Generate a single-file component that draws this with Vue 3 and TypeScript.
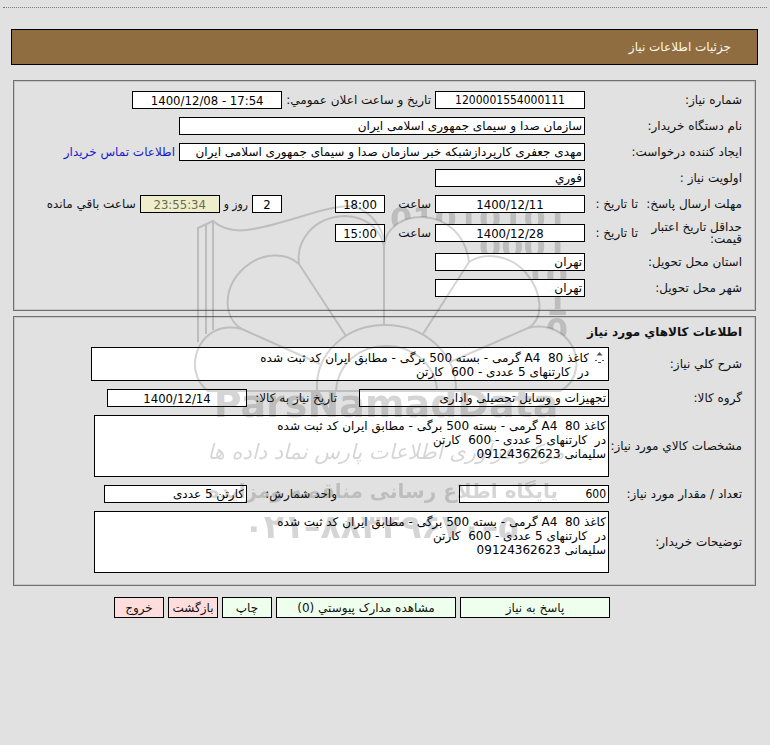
<script setup lang="ts">
import { reactive } from 'vue'

const goodsText = 'کاغذ A4  80 گرمی - بسته 500 برگی - مطابق ایران کد ثبت شده\nدر  کارتنهای 5 عددی - 600  کارتن'

const need = reactive({
  number: '1200001554000111',
  announced: '1400/12/08 - 17:54',
  buyer: 'سازمان صدا و سیمای جمهوری اسلامی ایران',
  creator: 'مهدی جعفری کارپردازشبکه خبر سازمان صدا و سیمای جمهوری اسلامی ایران',
  priority: 'فوري',
  replyDate: '1400/12/11',
  replyTime: '18:00',
  daysLeft: '2',
  timeLeft: '23:55:34',
  validDate: '1400/12/28',
  validTime: '15:00',
  province: 'تهران',
  city: 'تهران',
})

const goods = reactive({
  summary: goodsText,
  group: 'تجهیزات و وسایل تحصیلی واداری',
  neededOn: '1400/12/14',
  details: goodsText + '\nسلیمانی 09124362623',
  quantity: '600',
  unit: 'کارتن 5 عددی',
  notes: goodsText + '\nسلیمانی 09124362623',
})
</script>

<template>
  <div class="page" dir="rtl">
    <svg class="watermark under" viewBox="190 200 400 350" aria-hidden="true" direction="ltr">
      <defs>
        <mask id="behind-petals" maskUnits="userSpaceOnUse" x="190" y="190" width="400" height="360">
          <rect x="190" y="190" width="400" height="360" fill="#fff" />
          <path d="M384 330V246C388 206 462 204 469 262C500 245 540 270 540 300Q540 318 528 328C560 322 578 345 577 365L560 391H384Z" fill="#000" />
        </mask>
      </defs>
      <g class="bits" mask="url(#behind-petals)">
        <text x="568" y="230">01010101</text>
        <text x="568" y="258">0001</text>
        <text x="568" y="287">10</text>
        <text x="568" y="315">1</text>
        <text x="568" y="341">0</text>
      </g>
    </svg>

    <hr class="divider" />
    <header class="title-bar"><h1>جزئیات اطلاعات نیاز</h1></header>

    <main class="content">
      <section class="panel">
        <div class="row">
          <label class="caption" for="number">شماره نیاز:</label>
          <input id="number" v-model="need.number" class="box medium code" readonly />
          <label for="announced">تاریخ و ساعت اعلان عمومي:</label>
          <input id="announced" v-model="need.announced" class="box medium num" dir="ltr" readonly />
        </div>
        <div class="row">
          <label class="caption" for="buyer">نام دستگاه خریدار:</label>
          <input id="buyer" v-model="need.buyer" class="box long" readonly />
        </div>
        <div class="row">
          <label class="caption" for="creator">ایجاد کننده درخواست:</label>
          <input id="creator" v-model="need.creator" class="box long" readonly />
          <a href="#contact">اطلاعات تماس خریدار</a>
        </div>
        <div class="row">
          <label class="caption" for="priority">اولویت نیاز :</label>
          <input id="priority" v-model="need.priority" class="box medium" readonly />
        </div>
        <div class="row">
          <div class="caption split">
            <span>مهلت ارسال پاسخ:</span>
            <label for="reply-date">تا تاریخ :</label>
          </div>
          <input id="reply-date" v-model="need.replyDate" class="box medium num" dir="ltr" readonly />
          <label class="hour" for="reply-time">ساعت</label>
          <input id="reply-time" v-model="need.replyTime" class="box time num" readonly />
          <input id="days-left" v-model="need.daysLeft" class="box days num" readonly />
          <label class="narrow" for="days-left">روز و</label>
          <input id="time-left" v-model="need.timeLeft" class="box clock num" readonly />
          <label for="time-left">ساعت باقي مانده</label>
        </div>
        <div class="row">
          <div class="caption split">
            <span class="two-line">حداقل تاریخ اعتبار قیمت:</span>
            <label for="valid-date">تا تاریخ :</label>
          </div>
          <input id="valid-date" v-model="need.validDate" class="box medium num" dir="ltr" readonly />
          <label class="hour" for="valid-time">ساعت</label>
          <input id="valid-time" v-model="need.validTime" class="box time num" readonly />
        </div>
        <div class="row">
          <label class="caption" for="province">استان محل تحویل:</label>
          <input id="province" v-model="need.province" class="box medium" readonly />
        </div>
        <div class="row">
          <label class="caption" for="city">شهر محل تحویل:</label>
          <input id="city" v-model="need.city" class="box medium" readonly />
        </div>
      </section>

      <section class="panel goods">
        <h2>اطلاعات کالاهاي مورد نیاز</h2>
        <div class="row">
          <label class="caption" for="summary">شرح کلي نیاز:</label>
          <div class="box scroll-area">
            <svg class="spinner" viewBox="0 0 9 14" aria-hidden="true">
              <path d="M1.500 4.500 4.500 1 7.500 4.500Z" fill="#555" />
              <path d="M0 9.500h2M7 9.500h2M3 11.500h3" fill="none" stroke="#555" />
            </svg>
            <textarea id="summary" v-model="goods.summary" rows="2" readonly></textarea>
          </div>
        </div>
        <div class="row">
          <label class="caption" for="group">گروه کالا:</label>
          <input id="group" v-model="goods.group" class="box group" readonly />
          <label class="second" for="needed-on">تاریخ نیاز به کالا:</label>
          <input id="needed-on" v-model="goods.neededOn" class="box date num" dir="ltr" readonly />
        </div>
        <div class="row">
          <label class="caption" for="details">مشخصات کالاي مورد نیاز:</label>
          <textarea id="details" v-model="goods.details" class="box area" readonly></textarea>
        </div>
        <div class="row">
          <label class="caption" for="quantity">تعداد / مقدار مورد نیاز:</label>
          <div class="slot"><input id="quantity" v-model="goods.quantity" class="box medium" readonly /></div>
          <label class="second" for="unit">واحد شمارش:</label>
          <input id="unit" v-model="goods.unit" class="box unit" readonly />
        </div>
        <div class="row">
          <label class="caption" for="notes">توضیحات خریدار:</label>
          <textarea id="notes" v-model="goods.notes" class="box area" readonly></textarea>
        </div>
      </section>

      <div class="actions">
        <button class="wide-btn" type="button">پاسخ به نیاز</button>
        <button class="docs-btn" type="button">مشاهده مدارک پیوستي (0)</button>
        <button type="button">چاپ</button>
        <button class="leave" type="button">بازگشت</button>
        <button class="leave" type="button">خروج</button>
      </div>
    </main>

    <svg class="watermark" viewBox="190 200 400 350" aria-hidden="true" direction="ltr">
      <g class="lines">
        <path d="M198 342V228L213 221Q228 234 253 229C285 224 325 206 350 206Q374 210 384 238V325M206 334V224M213 330V221" />
        <path d="M346 336 299 264C296 242 312 217 345 216C366 217 380 228 384 246" />
        <path d="M299 264C286 252 262 252 244 268C222 288 223 318 242 329L320 364" />
        <path d="M242 329C220 324 207 334 200 345C190 364 196 382 208 391H560C578 382 582 357 568 340C558 328 542 324 528 328L450 362" />
        <path d="M384 246C388 206 462 204 469 262L423 334" />
        <path d="M469 262C486 251 512 256 526 273C542 292 545 318 528 328" />
        <path d="M317 391C315 352 347 325 385 325C424 325 457 353 456 391M336 391C338 363 360 346 386 346C414 346 436 366 437 391" />
      </g>
      <text class="brand" x="386" y="417">ParsNamadData</text>
      <text class="script" x="386" y="459" direction="rtl">مرکز فرآوری اطلاعات پارس نماد داده ها</text>
      <text class="slogan" x="383" y="498" direction="rtl">پایگاه اطلاع رسانی مناقصه ومزایده</text>
      <text class="phone" x="381" y="538">۰۲۱–۸۸۳۴۹۶۷۰–۵</text>
    </svg>
  </div>
</template>

<style>
body {
  margin: 0;
  background: #e1e1e1;
}
</style>

<style scoped>
.page {
  position: relative;
  isolation: isolate;
  padding: 7px 3px 20px;
  box-sizing: border-box;
  color: #111;
  font: 12px/14px 'DejaVu Sans', sans-serif;
}
.divider {
  margin: 0 0 21px;
  border: 0;
  border-top: 1px dotted #777;
}
.title-bar {
  display: flex;
  align-items: center;
  height: 34px;
  margin: 0 9px 0 8px;
  padding: 0 26px;
  border: 1px solid #000;
  background: #8f6d41;
  color: #fff8e8;
}
h1 {
  margin: 0;
  font-size: 12px;
  font-weight: normal;
}
.content {
  margin: 15px 11px 0 10px;
}
.panel {
  display: flex;
  flex-direction: column;
  gap: 8px;
  padding: 10px 13px 13px;
  border: 1px solid #707070;
  box-shadow: inset 0 0 0 1px #c6c6c6;
}
.goods {
  margin-top: 5px;
  padding-top: 9px;
  padding-bottom: 12px;
}
h2 {
  margin: 0;
  font-size: 12px;
  line-height: 13px;
  font-weight: bold;
}
.row {
  display: flex;
  align-items: center;
  gap: 4px;
  min-height: 18px;
  white-space: nowrap;
}
.caption {
  flex: none;
  width: 153px;
}
.goods .caption {
  width: 129px;
}
.split {
  display: flex;
  align-items: center;
  gap: 6px;
}
.split span {
  flex: none;
  width: 98px;
}
.two-line {
  line-height: 12px;
  white-space: normal;
}
.box {
  box-sizing: border-box;
  flex: none;
  margin: 0;
  padding: 0 2px;
  height: 18px;
  border: 1px solid #000;
  border-radius: 0;
  background: #fff;
  color: #000;
  font: inherit;
  outline: 0;
}
.num,
.code,
.narrow {
  font-family: 'DejaVu Sans Condensed', 'DejaVu Sans', sans-serif;
  text-align: center;
}
.num {
  font-size: 13px;
}
.medium {
  width: 150px;
}
.long {
  width: 406px;
}
.hour {
  width: 42px;
}
.time {
  width: 50px;
}
.days {
  width: 30px;
  margin-right: 49px;
}
.clock {
  width: 80px;
  background: #eeeecc;
  color: #6b6b50;
}
a {
  color: #1a1ac8;
  text-decoration: none;
}
.scroll-area {
  display: flex;
  width: 518px;
  height: 34px;
  padding: 3px 4px 0;
}
.spinner {
  flex: none;
  width: 9px;
  height: 14px;
  margin-left: 6px;
}
textarea {
  resize: none;
  overflow: hidden;
}
.scroll-area textarea {
  flex: 1;
  padding: 0;
  border: 0;
  background: transparent;
  font: inherit;
  outline: 0;
}
.area {
  width: 515px;
  height: 62px;
  padding: 3px 2px;
}
.group,
.slot {
  width: 250px;
}
.slot {
  flex: none;
}
.slot .box {
  display: block;
  font-family: 'DejaVu Sans Condensed', 'DejaVu Sans', sans-serif;
}
.second {
  width: 86px;
  margin-right: 18px;
}
.date {
  width: 140px;
}
.unit {
  width: 143px;
}
.actions {
  display: flex;
  gap: 4px;
  margin: 11px 146px 0 0;
}
button {
  box-sizing: border-box;
  width: 50px;
  height: 21px;
  padding: 0;
  border: 1px solid #000;
  border-radius: 0;
  background: #eeffee;
  color: #111;
  font: inherit;
}
.wide-btn {
  width: 150px;
}
.docs-btn {
  width: 180px;
}
.leave {
  background: #ffdddd;
}
.watermark {
  position: absolute;
  top: 200px;
  right: 180px;
  width: 400px;
  height: 350px;
  pointer-events: none;
  opacity: 0.2;
}
.under {
  z-index: -1;
}
.lines {
  fill: none;
  stroke: #333;
  stroke-width: 2;
}
.watermark text {
  fill: #333;
  font-family: 'DejaVu Sans', sans-serif;
  font-weight: bold;
  text-anchor: middle;
}
.watermark .bits text {
  font-size: 32px;
  text-anchor: end;
}
.watermark .brand {
  font-size: 38px;
}
.watermark .script {
  font-size: 21px;
  font-weight: normal;
  font-style: italic;
}
.watermark .slogan {
  font-size: 20px;
}
.watermark .phone {
  font-size: 33px;
}
</style>
